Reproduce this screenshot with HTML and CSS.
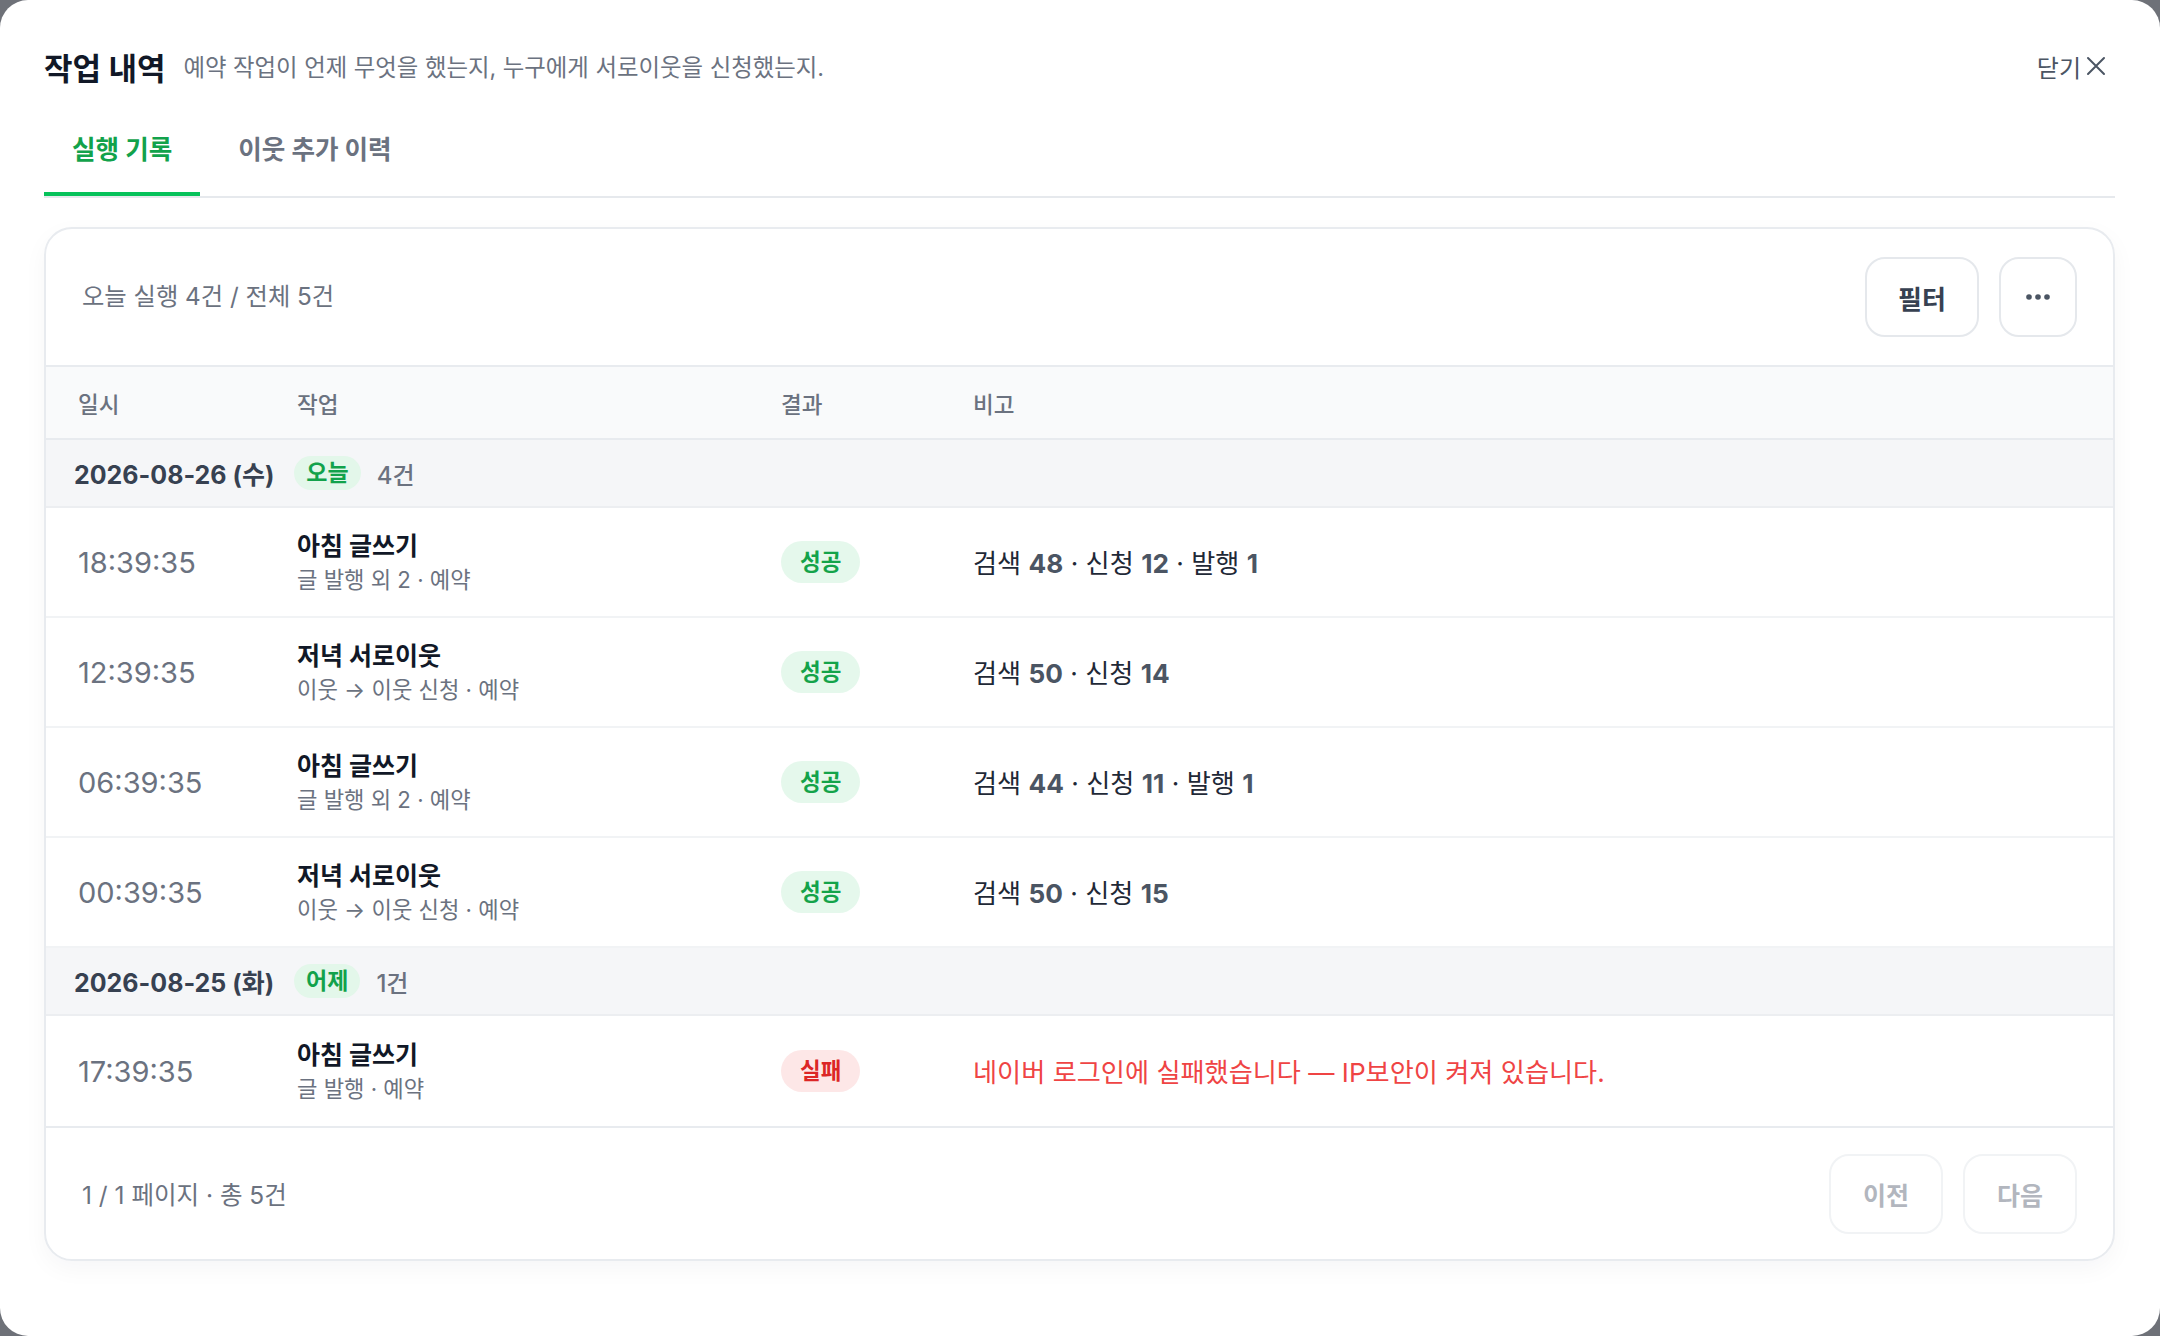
FILE: index.html
```html
<!DOCTYPE html>
<html lang="ko">

<head>
    <meta charset="UTF-8">
    <title>작업 내역</title>
    <link rel="stylesheet" href="styles.css">
</head>

<body>
    <div class="modal">
        <div class="modal-head">
            <div class="head-title">
                <h1>작업 내역</h1>
                <span class="head-desc">예약 작업이 언제 무엇을 했는지, 누구에게 서로이웃을 신청했는지.</span>
            </div>
            <button class="close-btn">닫기
                <svg width="22" height="22" viewBox="0 0 22 22"><path d="M3 3L19 19M19 3L3 19" stroke="#4b5563" stroke-width="2" stroke-linecap="round" fill="none"/></svg>
            </button>
        </div>

        <div class="tabs">
            <div class="tab active">실행 기록</div>
            <div class="tab">이웃 추가 이력</div>
        </div>

        <div class="card">
            <div class="toolbar">
                <span class="summary">오늘 실행 4건 / 전체 5건</span>
                <div class="tool-btns">
                    <button class="btn btn-filter">필터</button>
                    <button class="btn btn-more">
                        <svg width="24" height="6" viewBox="0 0 24 6"><circle cx="3" cy="3" r="2.8" fill="#4b5563"/><circle cx="12" cy="3" r="2.8" fill="#4b5563"/><circle cx="21" cy="3" r="2.8" fill="#4b5563"/></svg>
                    </button>
                </div>
            </div>

            <div class="row row-head">
                <div>일시</div>
                <div>작업</div>
                <div>결과</div>
                <div>비고</div>
            </div>

            <div class="group">
                <span class="group-date">2026-08-26 (수)</span>
                <span class="day-badge">오늘</span>
                <span class="group-count">4건</span>
            </div>

            <div class="row">
                <div class="time">18:39:35</div>
                <div class="job">
                    <div class="job-title">아침 글쓰기</div>
                    <div class="job-sub">글 발행 외 2 · 예약</div>
                </div>
                <div><span class="status ok">성공</span></div>
                <div class="note">검색 <b>48</b> · 신청 <b>12</b> · 발행 <b>1</b></div>
            </div>
            <div class="row">
                <div class="time">12:39:35</div>
                <div class="job">
                    <div class="job-title">저녁 서로이웃</div>
                    <div class="job-sub">이웃 → 이웃 신청 · 예약</div>
                </div>
                <div><span class="status ok">성공</span></div>
                <div class="note">검색 <b>50</b> · 신청 <b>14</b></div>
            </div>
            <div class="row">
                <div class="time">06:39:35</div>
                <div class="job">
                    <div class="job-title">아침 글쓰기</div>
                    <div class="job-sub">글 발행 외 2 · 예약</div>
                </div>
                <div><span class="status ok">성공</span></div>
                <div class="note">검색 <b>44</b> · 신청 <b>11</b> · 발행 <b>1</b></div>
            </div>
            <div class="row">
                <div class="time">00:39:35</div>
                <div class="job">
                    <div class="job-title">저녁 서로이웃</div>
                    <div class="job-sub">이웃 → 이웃 신청 · 예약</div>
                </div>
                <div><span class="status ok">성공</span></div>
                <div class="note">검색 <b>50</b> · 신청 <b>15</b></div>
            </div>

            <div class="group">
                <span class="group-date">2026-08-25 (화)</span>
                <span class="day-badge">어제</span>
                <span class="group-count">1건</span>
            </div>

            <div class="row row-last">
                <div class="time">17:39:35</div>
                <div class="job">
                    <div class="job-title">아침 글쓰기</div>
                    <div class="job-sub">글 발행 · 예약</div>
                </div>
                <div><span class="status fail">실패</span></div>
                <div class="note note-error">네이버 로그인에 실패했습니다 — IP보안이 켜져 있습니다.</div>
            </div>

            <div class="footer">
                <span class="summary">1 / 1 페이지 · 총 5건</span>
                <div class="tool-btns">
                    <button class="btn btn-page" disabled>이전</button>
                    <button class="btn btn-page" disabled>다음</button>
                </div>
            </div>
        </div>
    </div>
</body>

</html>
```

FILE: styles.css
```css
html, body {
    margin: 0;
    height: 100%;
}
body {
    background-color: #6e7178;
    font-family: Inter, 'Noto Sans CJK KR', sans-serif;
    color: #111827;
}
button {
    font-family: inherit;
    background: none;
    border: none;
    padding: 0;
    cursor: pointer;
}
.modal {
    box-sizing: border-box;
    height: 1336px;
    background-color: #fff;
    border-radius: 28px;
    padding: 44px 45px 0 44px;
}

/* header */
.modal-head {
    display: flex;
    justify-content: space-between;
    align-items: center;
    height: 44px;
}
.head-title {
    display: flex;
    align-items: center;
    gap: 18px;
}
.head-title h1 {
    margin: 0;
    font-size: 31px;
    font-weight: 700;
    color: #111827;
}
.head-desc {
    font-size: 23.4px;
    color: #6b7280;
}
.close-btn {
    display: flex;
    align-items: center;
    gap: 4px;
    margin-right: 8px;
    font-size: 24px;
    color: #4b5563;
}

/* tabs */
.tabs {
    display: flex;
    gap: 10px;
    margin-top: 31px;
    border-bottom: 2px solid #e6e9ed;
}
.tab {
    padding: 14px 28px 25px;
    line-height: 34px;
    font-size: 25.6px;
    font-weight: 700;
    color: #6b7280;
    border-bottom: 4px solid transparent;
}
.tab.active {
    color: #12a24b;
    border-bottom-color: #06c25a;
}

/* card */
.card {
    margin-top: 29px;
    border: 2px solid #e8ebef;
    border-radius: 28px;
    overflow: hidden;
    box-shadow: 0 8px 24px rgba(17, 24, 39, 0.04);
}
.toolbar,
.footer {
    display: flex;
    justify-content: space-between;
    align-items: center;
    padding: 0 36px;
}
.toolbar {
    height: 136px;
    border-bottom: 2px solid #e8ebef;
}
.toolbar .summary {
    margin-bottom: 6px;
}
.footer {
    height: 131px;
    border-top: 2px solid #e8ebef;
}
.summary {
    font-size: 24.3px;
    color: #6b7280;
}
.footer .summary {
    font-size: 24.5px;
}
.tool-btns {
    display: flex;
    gap: 20px;
}
.btn {
    box-sizing: border-box;
    height: 80px;
    border: 2px solid #e5e8ec;
    border-radius: 20px;
    font-size: 26px;
    font-weight: 700;
    color: #374151;
    display: flex;
    align-items: center;
    justify-content: center;
}
.btn-filter {
    width: 114px;
}
.btn-more {
    width: 78px;
}
.btn-page {
    width: 114px;
    border-color: #f1f3f5;
    color: #b2b6be;
    font-size: 25px;
    cursor: default;
}

/* table */
.row {
    display: grid;
    grid-template-columns: 219px 484px 192px 1fr;
    align-items: center;
    height: 108px;
    padding-left: 32px;
    border-bottom: 2px solid #f1f3f5;
}
.row-last {
    height: 110px;
    border-bottom: none;
}
.row-head {
    height: 71px;
    background-color: #f9fafb;
    border-bottom: 2px solid #e8ebef;
    font-size: 22.5px;
    font-weight: 500;
    color: #6b7280;
}
.group {
    display: flex;
    align-items: center;
    height: 66px;
    padding-left: 28px;
    background-color: #f5f6f8;
    border-bottom: 2px solid #eceef1;
}
.group-date {
    font-size: 25px;
    font-weight: 700;
    color: #374151;
}
.day-badge {
    margin-left: 20px;
    padding: 0 12px;
    line-height: 34px;
    border-radius: 17px;
    background-color: #e3f7ea;
    color: #12a24b;
    font-size: 23px;
    font-weight: 700;
}
.group-count {
    margin-left: 16px;
    font-size: 24px;
    font-weight: 500;
    color: #6b7280;
}
.time {
    font-size: 29px;
    color: #6b7280;
}
.job-title {
    font-size: 25px;
    font-weight: 700;
    line-height: 32px;
    color: #111827;
}
.job-sub {
    margin-top: 4px;
    font-size: 22.2px;
    line-height: 28px;
    color: #6b7280;
}
.status {
    display: inline-block;
    padding: 0 19px;
    line-height: 42px;
    border-radius: 21px;
    font-size: 22.5px;
    font-weight: 700;
}
.status.ok {
    background-color: #e5f8ec;
    color: #14a34a;
}
.status.fail {
    background-color: #fde7e7;
    color: #dc2626;
}
.note {
    font-size: 26.2px;
    color: #1f2937;
}
.note b {
    font-weight: 700;
    color: #4b5563;
}
.note-error {
    color: #ef4444;
}
```
